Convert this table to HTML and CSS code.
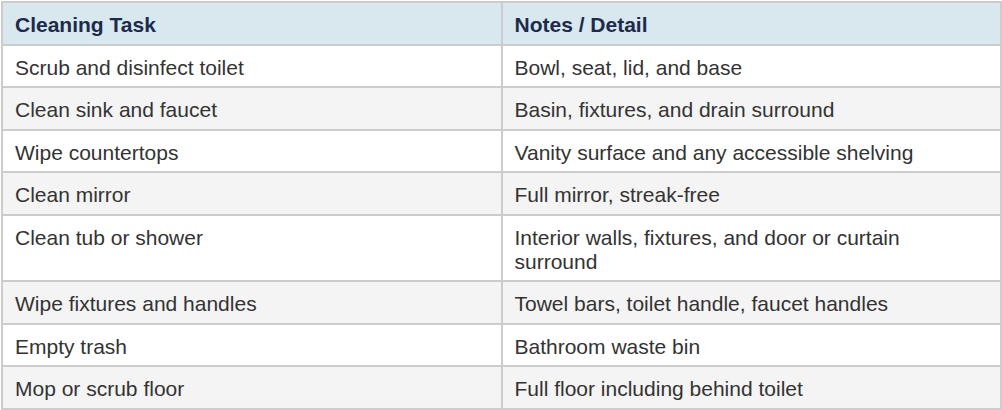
FILE: index.html
```html
<!DOCTYPE html>
<html>
<head>
<meta charset="utf-8">
<link rel="stylesheet" href="styles.css">
</head>
<body>
<table class="tasks">
  <thead>
    <tr><th>Cleaning Task</th><th>Notes / Detail</th></tr>
  </thead>
  <tbody>
    <tr><td>Scrub and disinfect toilet</td><td>Bowl, seat, lid, and base</td></tr>
    <tr><td>Clean sink and faucet</td><td>Basin, fixtures, and drain surround</td></tr>
    <tr><td>Wipe countertops</td><td>Vanity surface and any accessible shelving</td></tr>
    <tr><td>Clean mirror</td><td>Full mirror, streak-free</td></tr>
    <tr><td>Clean tub or shower</td><td>Interior walls, fixtures, and door or curtain surround</td></tr>
    <tr><td>Wipe fixtures and handles</td><td>Towel bars, toilet handle, faucet handles</td></tr>
    <tr><td>Empty trash</td><td>Bathroom waste bin</td></tr>
    <tr><td>Mop or scrub floor</td><td>Full floor including behind toilet</td></tr>
  </tbody>
</table>
</body>
</html>
```
FILE: styles.css
```css
html, body {
  margin: 0;
  padding: 0;
  background: #ffffff;
}
body {
  padding: 1px 0 0 1px;
  font-family: "Liberation Sans", Arial, Helvetica, sans-serif;
}
.tasks {
  width: 1001px;
  border-collapse: collapse;
  table-layout: fixed;
  font-size: 21px;
  line-height: 24px;
  color: #333333;
}
.tasks th,
.tasks td {
  border: 2px solid #cccccc;
  padding: 10px 12px 6.5px 12px;
  text-align: left;
  vertical-align: top;
}
.tasks th {
  background: #d9e7ef;
  color: #1c2b4c;
  font-weight: bold;
}
.tasks tbody tr:nth-child(even) td {
  background: #f4f4f4;
}
```
